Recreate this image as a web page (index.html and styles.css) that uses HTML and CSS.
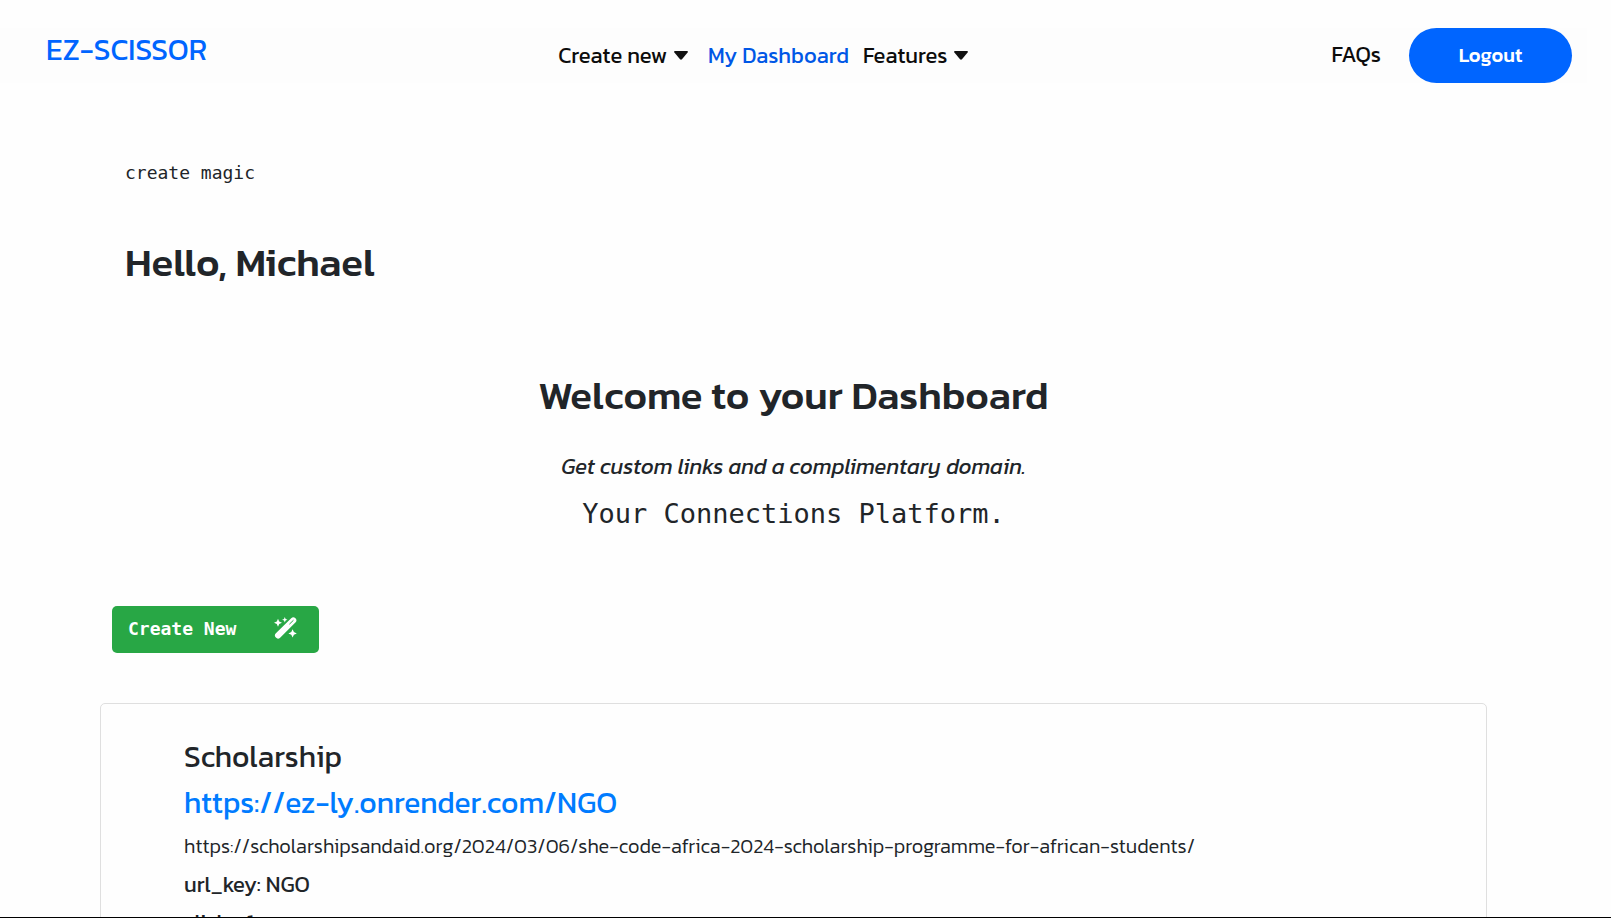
FILE: index.html
```
<!DOCTYPE html>
<html lang="en">
<head>
<meta charset="utf-8">
<meta name="viewport" content="width=device-width, initial-scale=1">
<title>EZ-SCISSOR | Dashboard</title>
<link rel="stylesheet" href="styles.css">
</head>
<body>
<div class="page">
  <header class="navbar">
    <a class="brand" href="#">EZ-SCISSOR</a>
    <nav class="menu" aria-label="Main">
      <button class="menu-item" type="button">Create new <svg class="caret" viewBox="0 0 14 9" aria-hidden="true"><path d="M1 0H13Q14.500 .3 13.600 1.500L8 8.300Q7 9.200 6 8.300L.4 1.500Q-.5 .3 1 0z"/></svg></button>
      <a class="menu-item active" href="#">My Dashboard</a>
      <button class="menu-item" type="button">Features <svg class="caret" viewBox="0 0 14 9" aria-hidden="true"><path d="M1 0H13Q14.500 .3 13.600 1.500L8 8.300Q7 9.200 6 8.300L.4 1.500Q-.5 .3 1 0z"/></svg></button>
    </nav>
    <div class="account">
      <a class="faq" href="#">FAQs</a>
      <button class="logout" type="button">Logout</button>
    </div>
  </header>
  <main class="content">
    <p class="tagline">create magic</p>
    <h1 class="greeting">Hello, Michael</h1>
    <section class="welcome">
      <h2 class="welcome-title">Welcome to your Dashboard</h2>
      <p class="welcome-sub">Get custom links and a complimentary domain.</p>
      <p class="platform">Your Connections Platform.</p>
    </section>
    <button class="create" type="button">Create New
      <svg class="wand" viewBox="0 0 23 22" aria-hidden="true">
        <path class="wand-stick" d="M4 18.500L19.300 3.400"/>
        <path class="wand-tip" d="M15.700 6.900L19.200 3.500"/>
        <path d="M4 1.800l1.200 2.800 2.800 1.200-2.800 1.200L4 9.800 2.800 7 0 5.800l2.800-1.200zM10.800 0l.8 1.900 1.900.8-1.900.8-.8 1.900-.8-1.900-1.900-.8 1.900-.8zM18.600 12.200l1.300 2.900 2.900 1.300-2.900 1.300-1.300 2.900-1.300-2.900-2.900-1.300 2.900-1.300z"/>
      </svg>
    </button>
    <article class="card">
      <h3 class="card-title">Scholarship</h3>
      <a class="short-link" href="#">https://ez-ly.onrender.com/NGO</a>
      <p class="long-url">https://scholarshipsandaid.org/2024/03/06/she-code-africa-2024-scholarship-programme-for-african-students/</p>
      <p class="meta">url_key: NGO</p>
      <p class="meta">clicks: 1</p>
    </article>
  </main>
</div>
</body>
</html>
```
FILE: styles.css
```
* { box-sizing: border-box; }
body {
  margin: 0;
  background: #fefefe;
  color: #212529;
  font-family: Kanit, "Noto Sans", sans-serif;
}
h1, h2, h3, p { margin: 0; }
a { text-decoration: none; }
button { font-family: inherit; border: 0; cursor: pointer; }
.page {
  height: 100vh;
  overflow: hidden;
  border-bottom: 1px solid #000;
  padding: 28px 24px 0 0;
}
.navbar {
  display: flex;
  justify-content: space-between;
  align-items: center;
  padding: 0 15px 0 46px;
  background: #fdfdfd;
}
.brand { color: #0065ff; font-size: 30px; line-height: 40px; padding-bottom: 12px; }
.menu { display: flex; gap: 14px; padding-right: 6px; }
.menu-item {
  display: flex;
  align-items: center;
  gap: 7px;
  padding: 0;
  background: none;
  color: #0c0c0c;
  font-size: 22px;
  line-height: 32px;
}
.active { color: #0057e6; }
.caret { width: 14px; height: 9px; margin-right: 6px; fill: #111; }
.account { display: flex; align-items: center; gap: 28px; }
.faq { padding-bottom: 1px; color: #0c0c0c; font-size: 22px; line-height: 32px; }
.logout {
  width: 163px;
  height: 55px;
  padding: 0 0 2px;
  border-radius: 28px;
  background: #0065ff;
  color: #fff;
  font-size: 20px;
  font-weight: 500;
}
.content { padding: 74px 100px 0; }
.tagline, .platform, .create { font-family: Consolas, "DejaVu Sans Mono", monospace; }
.tagline { padding-left: 25px; font-size: 18px; line-height: 32px; }
.greeting { padding: 47px 0 0 25px; font-size: 40px; line-height: 52px; font-weight: 500; }
.welcome { padding-top: 81px; text-align: center; }
.welcome-title { font-size: 40px; line-height: 52px; font-weight: 500; }
.welcome-sub { padding-top: 30px; font-size: 22px; line-height: 32px; font-style: italic; }
.platform { padding-top: 11px; font-size: 27px; line-height: 40px; }
.create {
  display: flex;
  align-items: center;
  gap: 38px;
  margin: 72px 0 0 12px;
  height: 47px;
  padding: 0 22px 3px 16px;
  border-radius: 5px;
  background: #28a745;
  color: #fff;
  font-size: 18px;
  font-weight: 700;
}
.wand { width: 23px; height: 22px; fill: #fff; }
.wand-stick { stroke: #fff; stroke-width: 6; stroke-linecap: round; }
.wand-tip { stroke: #28a745; stroke-width: 1; stroke-linecap: round; }
.card {
  margin-top: 50px;
  padding: 33px 83px;
  border: 1px solid #dfdfdf;
  border-radius: 5px;
}
.card-title, .short-link { display: block; font-size: 30px; line-height: 40px; font-weight: 400; }
.short-link { margin-top: 6px; color: #007bff; }
.long-url { margin-top: 3px; font-size: 20px; line-height: 40px; font-weight: 300; }
.meta { font-size: 22px; line-height: 38px; }
```
